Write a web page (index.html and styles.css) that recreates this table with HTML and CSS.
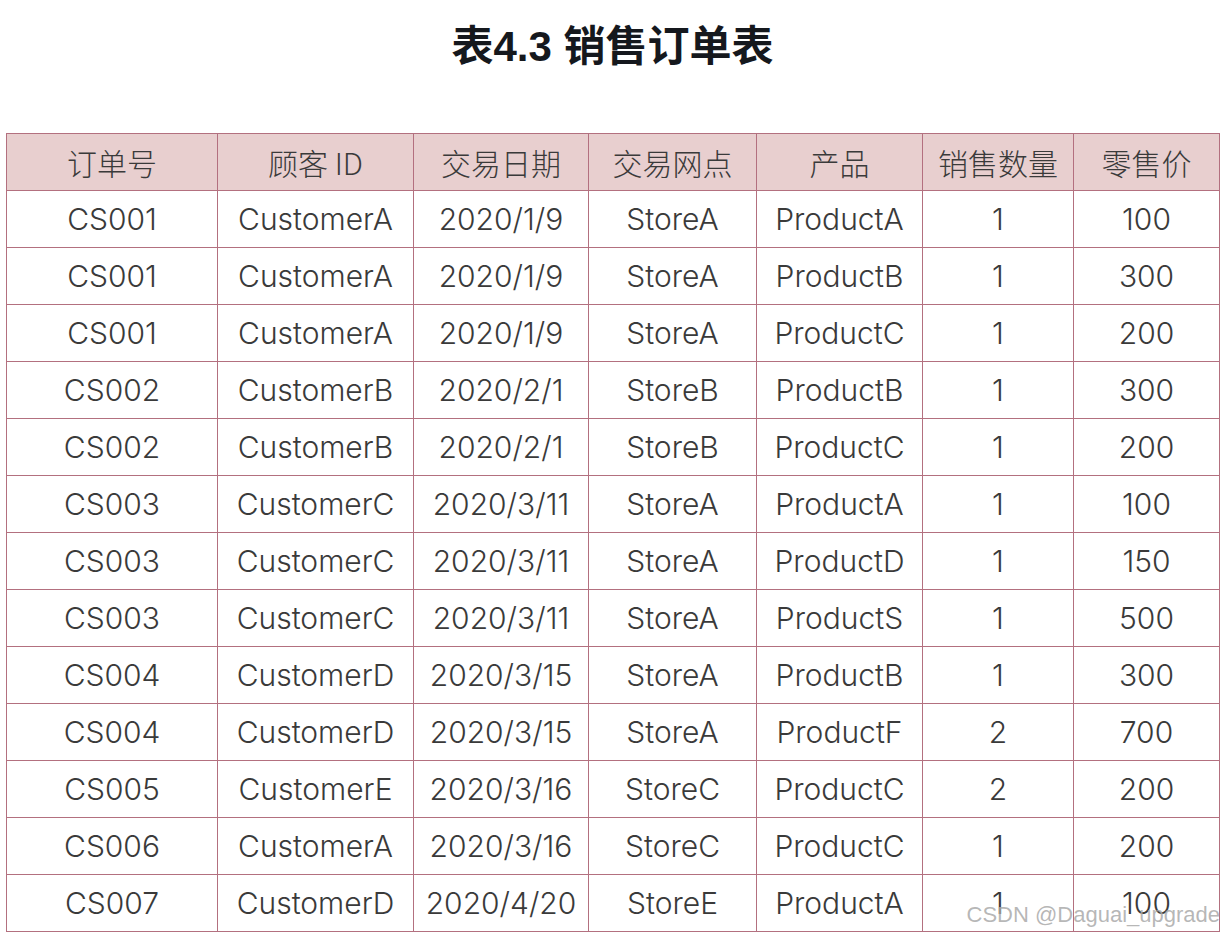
FILE: index.html
```html
<!DOCTYPE html>
<html lang="zh-CN">
<head>
<meta charset="utf-8">
<title>表4.3 销售订单表</title>
<link rel="stylesheet" href="styles.css">
</head>
<body>
<div class="page">
  <h1 class="title">表4.3 销售订单表</h1>
  <table class="orders">
    <colgroup>
      <col class="c1"><col class="c2"><col class="c3"><col class="c4"><col class="c5"><col class="c6"><col class="c7">
    </colgroup>
    <thead>
      <tr><th>订单号</th><th>顾客 ID</th><th>交易日期</th><th>交易网点</th><th>产品</th><th>销售数量</th><th>零售价</th></tr>
    </thead>
    <tbody>
      <tr><td>CS001</td><td>CustomerA</td><td>2020/1/9</td><td>StoreA</td><td>ProductA</td><td>1</td><td>100</td></tr>
      <tr><td>CS001</td><td>CustomerA</td><td>2020/1/9</td><td>StoreA</td><td>ProductB</td><td>1</td><td>300</td></tr>
      <tr><td>CS001</td><td>CustomerA</td><td>2020/1/9</td><td>StoreA</td><td>ProductC</td><td>1</td><td>200</td></tr>
      <tr><td>CS002</td><td>CustomerB</td><td>2020/2/1</td><td>StoreB</td><td>ProductB</td><td>1</td><td>300</td></tr>
      <tr><td>CS002</td><td>CustomerB</td><td>2020/2/1</td><td>StoreB</td><td>ProductC</td><td>1</td><td>200</td></tr>
      <tr><td>CS003</td><td>CustomerC</td><td>2020/3/11</td><td>StoreA</td><td>ProductA</td><td>1</td><td>100</td></tr>
      <tr><td>CS003</td><td>CustomerC</td><td>2020/3/11</td><td>StoreA</td><td>ProductD</td><td>1</td><td>150</td></tr>
      <tr><td>CS003</td><td>CustomerC</td><td>2020/3/11</td><td>StoreA</td><td>ProductS</td><td>1</td><td>500</td></tr>
      <tr><td>CS004</td><td>CustomerD</td><td>2020/3/15</td><td>StoreA</td><td>ProductB</td><td>1</td><td>300</td></tr>
      <tr><td>CS004</td><td>CustomerD</td><td>2020/3/15</td><td>StoreA</td><td>ProductF</td><td>2</td><td>700</td></tr>
      <tr><td>CS005</td><td>CustomerE</td><td>2020/3/16</td><td>StoreC</td><td>ProductC</td><td>2</td><td>200</td></tr>
      <tr><td>CS006</td><td>CustomerA</td><td>2020/3/16</td><td>StoreC</td><td>ProductC</td><td>1</td><td>200</td></tr>
      <tr><td>CS007</td><td>CustomerD</td><td>2020/4/20</td><td>StoreE</td><td>ProductA</td><td>1</td><td>100</td></tr>
    </tbody>
  </table>
  <div class="watermark">CSDN @Daguai_upgrade</div>
</div>
</body>
</html>
```

FILE: styles.css
```css
html, body {
  margin: 0;
  padding: 0;
  background: #ffffff;
}
.page {
  position: relative;
  width: 1226px;
  height: 936px;
  padding: 0 7px 0 6px;
  box-sizing: border-box;
  overflow: hidden;
}
.title {
  margin: 0;
  padding-top: 21px;
  height: 112px;
  box-sizing: border-box;
  text-align: center;
  font-family: "Liberation Sans", "Noto Sans CJK SC", sans-serif;
  font-weight: 700;
  font-size: 42px;
  line-height: 52px;
  color: #15181d;
}
.orders {
  width: 1213px;
  margin-top: 21px;
  border-collapse: collapse;
  table-layout: fixed;
  font-family: "Inter", "Liberation Sans", "Noto Sans CJK SC", sans-serif;
  color: #3a3a3a;
}
.c1 { width: 211px; }
.c2 { width: 196px; }
.c3 { width: 175px; }
.c4 { width: 168px; }
.c5 { width: 166px; }
.c6 { width: 151px; }
.c7 { width: 146px; }
.orders th,
.orders td {
  border: 1px solid #b3707f;
  height: 56px;
  padding: 0;
  text-align: center;
  vertical-align: middle;
  font-size: 30px;
  font-weight: 300;
  line-height: 56px;
  white-space: nowrap;
}
.orders th {
  background: #e8cfcf;
  font-family: "Noto Sans CJK SC", sans-serif;
  font-weight: 300;
  font-size: 30px;
  color: #3a3a3a;
}
.watermark {
  position: absolute;
  right: 6px;
  bottom: 8px;
  font-family: "Liberation Sans", sans-serif;
  font-size: 22px;
  color: rgba(170, 170, 170, 0.85);
}
```
